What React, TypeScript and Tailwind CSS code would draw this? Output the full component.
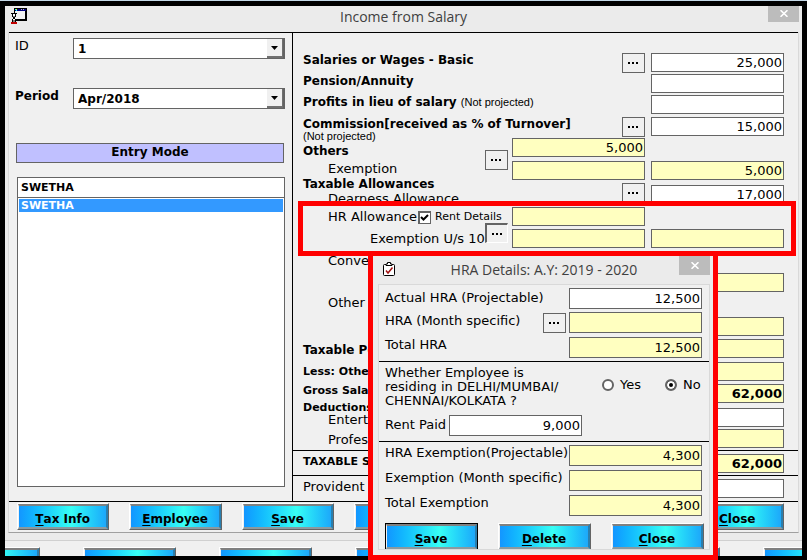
import React from "react";
import clsx from "clsx";

const white = "bg-white";
const yellow = "bg-[#ffffc0]";

interface FieldProps {
  label: string;
  value?: string;
  id?: string;
  className?: string;
}

function Field({ label, value = "", id, className }: FieldProps) {
  return (
    <input
      id={id}
      aria-label={label}
      defaultValue={value}
      className={clsx(
        "block w-[133px] shrink-0 border border-[#646464] pr-px text-right text-[13px] outline-none",
        className
      )}
    />
  );
}

function MoreButton({ label, className }: { label: string; className?: string }) {
  return (
    <button
      aria-label={label}
      className={clsx(
        "flex h-5 w-[23px] shrink-0 items-center justify-center border border-[#646464] bg-[#f0f0f0]",
        className
      )}
    >
      <svg width="11" height="2" viewBox="0 0 11 2" fill="#000" shapeRendering="crispEdges">
        <rect x="0" width="2" height="2" />
        <rect x="4" width="2" height="2" />
        <rect x="8" width="2" height="2" />
      </svg>
    </button>
  );
}

interface ActionButtonProps {
  text?: string;
  label?: string;
  className?: string;
}

function ActionButton({ text = "", label, className }: ActionButtonProps) {
  return (
    <button
      aria-label={label}
      className={clsx(
        "h-[27px] border border-t-white border-l-white border-r-[#646464] border-b-[#646464] text-[12px] font-bold",
        className
      )}
    >
      <span className="flex h-full items-center justify-center border-t-2 border-r-2 border-b-2 border-l border-t-[#808080] border-r-[#2a7fae] border-b-[#8a9aa0] border-l-[#f0f0f0] bg-linear-to-r from-[#1496ff] via-[#38fff4] via-60% to-[#1ea8fa] pt-[5px] whitespace-nowrap">
        <span className="underline underline-offset-2">{text.charAt(0)}</span>
        {text.slice(1)}
      </span>
    </button>
  );
}

function CloseBox({ className }: { className?: string }) {
  return (
    <button
      aria-label="Close window"
      className={clsx("flex w-[31px] items-center justify-center bg-[#bcbcbc]", className)}
    >
      <svg width="8" height="7" viewBox="0 0 8 7" stroke="#fff" strokeWidth="1.6">
        <path d="M0.5 0.2 7.5 6.8M7.5 0.2 0.5 6.8" />
      </svg>
    </button>
  );
}

function Combo({ id, value }: { id: string; value: string }) {
  return (
    <div className="relative w-[212px]">
      <select
        id={id}
        defaultValue={value}
        className="block h-[21px] w-full appearance-none border border-r-2 border-[#646464] bg-white pl-1 text-[12px] font-bold outline-none"
      >
        <option>{value}</option>
      </select>
      <span className="pointer-events-none absolute top-px right-0.5 flex h-[19px] w-4 items-center justify-center border-r border-b-2 border-[#707070] bg-[#f0f0f0]">
        <svg width="7" height="4" viewBox="0 0 7 4">
          <path d="M0 0h7L3.5 4z" />
        </svg>
      </span>
    </div>
  );
}

function FormIcon() {
  return (
    <svg width="16" height="16" viewBox="0 0 16 16" shapeRendering="crispEdges">
      <rect x="3" y="0" width="13" height="13" fill="#000" />
      <rect x="4" y="1" width="11" height="2" fill="#000080" />
      <path d="M4 1h1v1H4zM5 2h1v1H5z" fill="#00ffff" />
      <path d="M5 1h1v1H5z" fill="#ffff00" />
      <path d="M10 1h1v1h-1zM12 1h1v1h-1z" fill="#c0c0c0" />
      <rect x="4" y="3" width="10" height="8" fill="#f4f4f4" />
      <path d="M0 5h6v1H0zM1 6h1v3H1zM4 6h1v3H4zM2 9h2v2H2zM1 11h1v3H1zM4 11h1v3H4z" fill="#000" />
      <path d="M2 6h2v3H2zM2 11h2v1H2z" fill="#fff" />
      <path d="M2 8h2v1H2zM2 12h2v2H2z" fill="#808080" />
      <path d="M0 14h6v2H0z" fill="#c00000" />
    </svg>
  );
}

function ClipboardIcon() {
  return (
    <svg width="12" height="14" viewBox="0 0 12 14">
      <rect x="0.5" y="2.5" width="11" height="11" rx="1" fill="#fff" stroke="#000" />
      <path d="M3 3.5V2h1.5V0.5h3V2H9v1.5z" fill="#fff" stroke="#000" />
      <path d="M3 8.5 5 11 9.5 5.5" fill="none" stroke="#a01010" strokeWidth="1.5" />
    </svg>
  );
}

const bold = "block h-3 text-[12px] font-bold";
const boldSmall = "block h-3 text-[11px] font-bold";
const plain = "block h-3 pl-[25px] text-[13px]";
const note = "font-['Liberation_Sans',sans-serif] text-[11px] font-normal";
const totals = "flex justify-between border-t border-black pt-[3px] pr-[14px] pl-[10px]";
const money = "h-[19px]";

function SalaryForm() {
  return (
    <div className="min-w-0 flex-1 border-l border-black">
      <div className="grid grid-cols-[minmax(0,1fr)_23px_137px_139px] pr-[14px] pl-[10px]">
        <div className="pt-[21px] leading-3 whitespace-nowrap">
          <label htmlFor="basic" className={bold}>Salaries or Wages - Basic</label>
          <label htmlFor="pension" className={clsx(bold, "mt-[9px]")}>Pension/Annuity</label>
          <label htmlFor="profits" className={clsx(bold, "mt-[9px]")}>
            Profits in lieu of salary <span className={note}>(Not projected)</span>
          </label>
          <label htmlFor="commission" className={clsx(bold, "mt-[10px]")}>Commission[received as % of Turnover]</label>
          <p className={clsx(note, "h-3")}>(Not projected)</p>
          <label htmlFor="others" className={clsx(bold, "mt-[3px]")}>Others</label>
          <label htmlFor="exemption" className={clsx(plain, "mt-[6px]")}>Exemption</label>
          <p className={clsx(bold, "mt-[3px]")}>Taxable Allowances</p>
          <label htmlFor="dearness" className={clsx(plain, "mt-[3px]")}>Dearness Allowance</label>
          <div className="mt-[6px] flex h-3 items-center pl-[25px] text-[13px]">
            <label htmlFor="hra">HR Allowance</label>
            <input
              id="rent"
              type="checkbox"
              defaultChecked
              className="ml-px size-[13px] shrink-0 appearance-none border-2 border-r border-b border-[#646464] bg-white"
            />
            <svg className="pointer-events-none -ml-[11px] size-[9px] shrink-0" viewBox="0 0 9 9">
              <path d="M1 4 3.5 6.5 8 2" fill="none" stroke="#000" strokeWidth="2" />
            </svg>
            <label htmlFor="rent" className="ml-[6px] text-[11px]">Rent Details</label>
          </div>
          <label htmlFor="hra-exempt" className="mt-[10px] block h-3 pl-[67px] text-[13px]">Exemption U/s 10</label>
          <p className={clsx(plain, "mt-[10px]")}>Conveyance</p>
          <p className={clsx(plain, "mt-[30px]")}>Other</p>
          <label htmlFor="perks" className={clsx(bold, "mt-[35px]")}>Taxable Perks</label>
          <label htmlFor="less" className={clsx(boldSmall, "mt-[10px]")}>Less: Others</label>
          <label htmlFor="gross" className={clsx(boldSmall, "mt-[7px]")}>Gross Salary</label>
          <p className={clsx(boldSmall, "mt-[5px]")}>Deductions</p>
          <label htmlFor="entertain" className={plain}>Entertainment</label>
          <label htmlFor="professional" className={clsx(plain, "mt-2")}>Professional</label>
        </div>

        <div className="pt-[117px]">
          <MoreButton label="Others details" />
          <MoreButton
            label="HRA details"
            className="mt-[53px] border-t-2 border-l-2 border-r-white border-b-white"
          />
        </div>

        <div className="pt-5 pl-1">
          <MoreButton label="Basic details" className="ml-auto" />
          <MoreButton label="Commission details" className="mt-[44px] ml-auto" />
          <Field id="others" label="Others" value="5,000" className={clsx(money, yellow, "mt-px")} />
          <Field label="Others exempt" className={clsx(money, yellow, "mt-1")} />
          <MoreButton label="Dearness details" className="mt-[3px] ml-auto" />
          <Field id="hra" label="HR Allowance" className={clsx(money, yellow, "mt-1")} />
          <Field label="HRA exempt amount" className={clsx(money, yellow, "mt-[3px]")} />
        </div>

        <div className="pt-5 pb-0.5 pl-[6px]">
          <Field id="basic" label="Basic" value="25,000" className={clsx(money, white)} />
          <Field id="pension" label="Pension" className={clsx(money, white, "mt-0.5")} />
          <Field id="profits" label="Profits" className={clsx(money, white, "mt-0.5")} />
          <Field id="commission" label="Commission" value="15,000" className={clsx(money, white, "mt-[3px]")} />
          <Field id="exemption" label="Exemption" value="5,000" className={clsx(money, yellow, "mt-[25px]")} />
          <Field id="dearness" label="Dearness" value="17,000" className={clsx(money, white, "mt-[5px]")} />
          <Field id="hra-exempt" label="HRA Exemption" className={clsx(money, yellow, "mt-[25px]")} />
          <Field label="Conveyance" className={clsx(money, yellow, "mt-[25px]")} />
          <Field label="Other allowance" className={clsx(money, yellow, "mt-[25px]")} />
          <Field id="perks" label="Perks" className={clsx(money, yellow, "mt-[3px]")} />
          <Field id="less" label="Less" className={clsx(money, yellow, "mt-1")} />
          <Field id="gross" label="Gross" value="62,000" className={clsx(money, yellow, "mt-[3px] font-bold")} />
          <Field id="entertain" label="Entertainment" className={clsx(money, white, "mt-[5px]")} />
          <Field id="professional" label="Professional" className={clsx(money, yellow, "mt-0.5")} />
        </div>
      </div>

      <div className={clsx(totals, "pb-0.5")}>
        <label htmlFor="taxable" className="text-[11px] leading-4 font-bold whitespace-nowrap">TAXABLE SALARY</label>
        <Field id="taxable" label="Taxable salary" value="62,000" className={clsx(money, yellow, "font-bold")} />
      </div>
      <div className={clsx(totals, "pb-[3px]")}>
        <label htmlFor="provident" className="text-[13px] leading-4 whitespace-nowrap">Provident Fund</label>
        <Field id="provident" label="Provident fund" className={clsx(money, white)} />
      </div>
    </div>
  );
}

function EmployeePicker() {
  return (
    <div className="flex w-[283px] shrink-0 flex-col pt-[5px] pr-[7px] pb-[14px] pl-[6px]">
      <div className="flex justify-between">
        <label htmlFor="emp-id" className="text-[13px] leading-4">ID</label>
        <Combo id="emp-id" value="1" />
      </div>
      <div className="mt-[29px] flex justify-between">
        <label htmlFor="period" className="text-[12px] leading-4 font-bold">Period</label>
        <Combo id="period" value="Apr/2018" />
      </div>
      <div className="mt-[34px] mr-px ml-px h-5 border border-[#646464] bg-[#c0c0ff] text-center text-[12px] leading-4 font-bold">
        Entry Mode
      </div>
      <input
        aria-label="Employee name"
        defaultValue="SWETHA"
        className="mt-[14px] ml-0.5 h-[21px] border border-[#646464] bg-white pl-[3px] text-[11px] font-bold outline-none"
      />
      <ul className="-mt-px ml-0.5 flex-1 border border-[#646464] bg-white p-px">
        <li className="h-[13px] bg-[#3399ff] pl-0.5 text-[11px] leading-[13px] font-bold text-white">SWETHA</li>
      </ul>
    </div>
  );
}

function HraDialog() {
  const field = "h-[21px]";
  const row = "flex justify-between pr-[7px] pl-[6px]";
  const text = "text-[13px] whitespace-nowrap";
  return (
    <div
      role="dialog"
      aria-label="HRA Details"
      className="absolute top-[250px] left-[368px] w-[350px] border-5 border-[#ff0000] bg-[#ebebeb] pr-[3px] pb-[5px] pl-[5px]"
    >
      <div className="relative flex h-7 items-center justify-center pb-0.5 font-['Open_Sans',sans-serif] text-[14px] text-[#404040]">
        <span className="absolute top-[6px] left-[5px]"><ClipboardIcon /></span>
        <h2>HRA Details: A.Y: 2019 - 2020</h2>
        <CloseBox className="absolute top-0 right-0 h-[19px]" />
      </div>
      <div className="h-[266px] overflow-hidden border border-[#d9d9d9] bg-[#f0f0f0] pt-[3px]">
        <div className={row}>
          <label htmlFor="d-actual" className={clsx(text, "leading-5")}>Actual HRA (Projectable)</label>
          <Field id="d-actual" label="Actual HRA" value="12,500" className={clsx(field, white)} />
        </div>
        <div className={clsx(row, "mt-[3px]")}>
          <label htmlFor="d-month" className={clsx(text, "flex-1 leading-[18px]")}>HRA (Month specific)</label>
          <MoreButton label="Month details" className="mt-px mr-[3px]" />
          <Field id="d-month" label="HRA month" className={clsx(field, yellow)} />
        </div>
        <div className={clsx(row, "mt-1")}>
          <label htmlFor="d-total" className={clsx(text, "leading-4")}>Total HRA</label>
          <Field id="d-total" label="Total HRA" value="12,500" className={clsx(field, yellow)} />
        </div>

        <fieldset className="mt-[3px] flex border-t border-black pt-1 pl-[6px] text-[13px]">
          <p className="w-[217px] leading-[14px] whitespace-nowrap">
            Whether Employee is
            <br />
            residing in DELHI/MUMBAI/
            <br />
            CHENNAI/KOLKATA ?
          </p>
          <label className="flex h-7 w-[63px] items-center gap-[6px] pt-[10px]">
            <input type="radio" name="metro" className="size-3 appearance-none rounded-full border-2 border-[#646464] bg-white" />
            Yes
          </label>
          <label className="flex h-7 items-center gap-[6px] pt-[10px]">
            <input
              type="radio"
              name="metro"
              defaultChecked
              className="size-3 appearance-none rounded-full border-2 border-[#646464] bg-black ring-2 ring-white ring-inset"
            />
            No
          </label>
        </fieldset>
        <div className="mt-[7px] flex gap-[3px] pl-[6px]">
          <label htmlFor="d-rent" className={clsx(text, "leading-5")}>Rent Paid</label>
          <Field id="d-rent" label="Rent paid" value="9,000" className={clsx(field, white)} />
        </div>

        <div className={clsx(row, "mt-[5px] border-t border-black pt-[3px]")}>
          <label htmlFor="d-ex" className={clsx(text, "leading-4")}>HRA Exemption(Projectable)</label>
          <Field id="d-ex" label="HRA exemption" value="4,300" className={clsx(field, yellow)} />
        </div>
        <div className={clsx(row, "mt-1")}>
          <label htmlFor="d-exm" className={clsx(text, "leading-4")}>Exemption (Month specific)</label>
          <Field id="d-exm" label="Exemption month" className={clsx(field, yellow)} />
        </div>
        <div className={clsx(row, "mt-1")}>
          <label htmlFor="d-ext" className={clsx(text, "leading-4")}>Total Exemption</label>
          <Field id="d-ext" label="Total exemption" value="4,300" className={clsx(field, yellow)} />
        </div>
        <div className="mt-[7px] grid grid-cols-3 gap-5 pr-[5px] pl-[6px]">
          <ActionButton text="Save" className="outline-1 -outline-offset-1 outline-black" />
          <ActionButton text="Delete" />
          <ActionButton text="Close" />
        </div>
      </div>
    </div>
  );
}

export default function App() {
  return (
    <div className="relative min-h-screen overflow-hidden border-t border-[#c5d9e8] bg-black pt-[5px] pr-[5px] pb-1 pl-[5px] font-['DejaVu_Sans',sans-serif] text-black">
      <main className="bg-[#ebebeb]">
        <header className="relative flex h-[26px] items-center justify-center pb-[6px] font-['Open_Sans',sans-serif] text-[14px] text-[#404040]">
          <span className="absolute top-0.5 left-[6px]"><FormIcon /></span>
          <h1>Income from Salary</h1>
          <CloseBox className="absolute top-0 right-[3px] h-4 pb-0.5" />
        </header>

        <div className="mr-[3px] ml-[3px] border-r border-b border-l border-[#d9d9d9] border-b-[#a0a0a0] bg-[#f0f0f0]">
          <div className="flex border-y border-black">
            <EmployeePicker />
            <SalaryForm />
          </div>
          <div className="grid grid-cols-7 gap-5 pt-px pr-[14px] pb-0.5 pl-2">
            <ActionButton text="Tax Info" />
            <ActionButton text="Employee" />
            <ActionButton text="Save" />
            <ActionButton label="Print" />
            <ActionButton label="Delete" />
            <ActionButton label="Report" />
            <ActionButton text="Close" />
          </div>
        </div>

        {/* Toolbar of the window behind */}
        <div className="mt-[7px] flex h-4 gap-[43px] overflow-hidden border-t border-[#d0d0d0] bg-[#f0f0f0] pt-[6px]">
          <ActionButton label="New" className="-ml-[58px] w-[93px] shrink-0" />
          <ActionButton label="Edit" className="w-[93px] shrink-0" />
          <ActionButton label="View" className="w-[93px] shrink-0" />
          <ActionButton label="Print" className="w-[93px] shrink-0" />
          <ActionButton label="Find" className="w-[93px] shrink-0" />
          <ActionButton label="Help" className="w-[93px] shrink-0" />
          <ActionButton label="Exit" className="w-[93px] shrink-0" />
        </div>
      </main>

      <div className="pointer-events-none absolute top-[200px] left-[298px] h-[55px] w-[498px] border-5 border-[#ff0000]" />
      <HraDialog />
    </div>
  );
}
